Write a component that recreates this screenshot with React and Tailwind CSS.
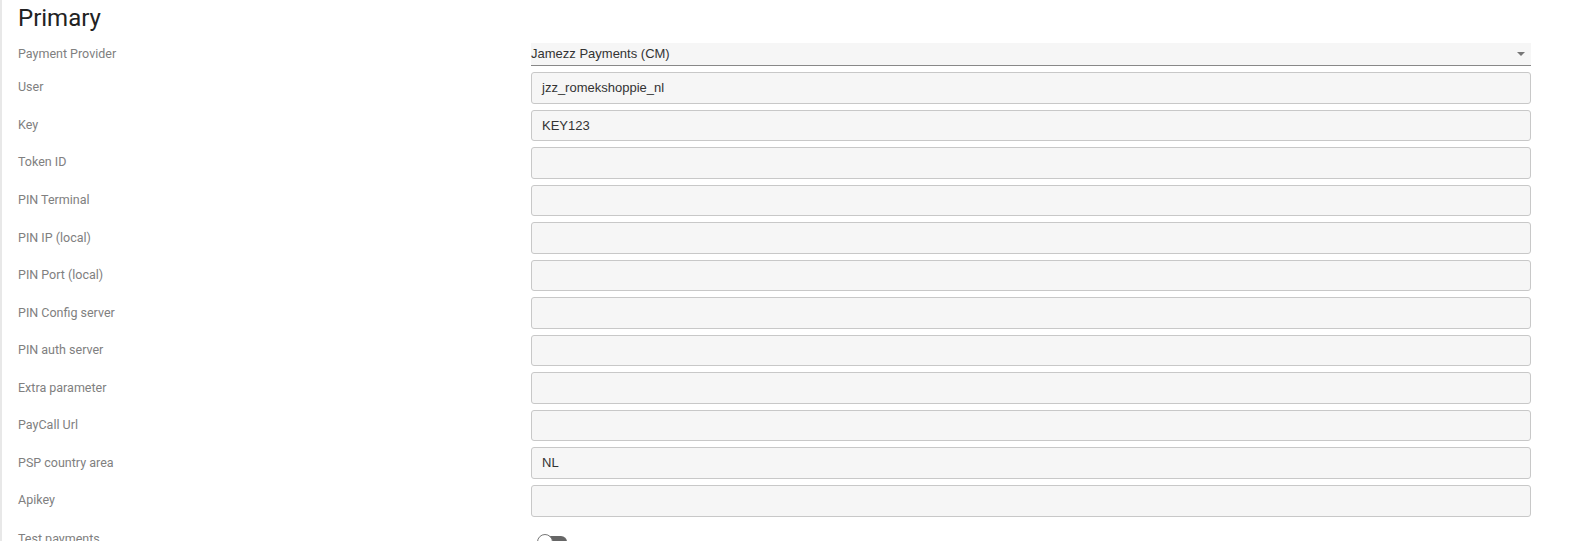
export default function App() {
  const fields = [
    { label: "User", value: "jzz_romekshoppie_nl" },
    { label: "Key", value: "KEY123" },
    { label: "Token ID", value: "" },
    { label: "PIN Terminal", value: "" },
    { label: "PIN IP (local)", value: "" },
    { label: "PIN Port (local)", value: "" },
    { label: "PIN Config server", value: "" },
    { label: "PIN auth server", value: "" },
    { label: "Extra parameter", value: "" },
    { label: "PayCall Url", value: "" },
    { label: "PSP country area", value: "NL" },
    { label: "Apikey", value: "" },
  ];

  return (
    <div className="h-[541px] overflow-hidden bg-white">
      <div className="h-full border-l-2 border-[#e8e8e8] pl-[16px] pr-[40px] font-['Roboto',sans-serif]">
        <h2 className="pt-[3px] text-[24px] leading-[30px] text-[#222]">Primary</h2>

        {/* Payment provider select */}
        <div className="mt-[10px] flex items-center">
          <label className="w-[513px] shrink-0 text-[12.5px] text-[#808080]">
            Payment Provider
          </label>
          <div className="flex h-[23px] flex-1 items-center justify-between border-b border-[#888] bg-[#f6f6f6] font-['Liberation_Sans',Arial,sans-serif] text-[13px] text-[#333]">
            <span>Jamezz Payments (CM)</span>
            <span className="mr-[6px] h-0 w-0 border-x-[4px] border-t-[4px] border-x-transparent border-t-[#777]"></span>
          </div>
        </div>

        <div className="mt-[6px] flex flex-col">
          {fields.map((f) => (
            <div key={f.label} className="flex h-[37.55px] items-start">
              <label className="flex h-[31.5px] w-[513px] shrink-0 items-center text-[12.5px] text-[#808080]">
                {f.label}
              </label>
              <div className="flex h-[31.5px] flex-1 items-center rounded-[3px] border border-[#c8c8c8] bg-[#f6f6f6] px-[10px] font-['Liberation_Sans',Arial,sans-serif] text-[13px] text-[#333]">
                {f.value}
              </div>
            </div>
          ))}
        </div>

        {/* Test payments toggle */}
        <div className="flex items-start">
          <label className="w-[513px] shrink-0 pt-[10px] text-[12.5px] leading-none text-[#808080]">
            Test payments
          </label>
          <div className="relative ml-[6px] mt-[12px] h-[14px] w-[30px]">
            <div className="absolute left-[6px] top-[1px] h-[12px] w-[24px] rounded-full bg-[#666]"></div>
            <div className="absolute left-0 top-[-1px] h-[16px] w-[16px] rounded-full border border-[#777] bg-white"></div>
          </div>
        </div>
      </div>
    </div>
  );
}
